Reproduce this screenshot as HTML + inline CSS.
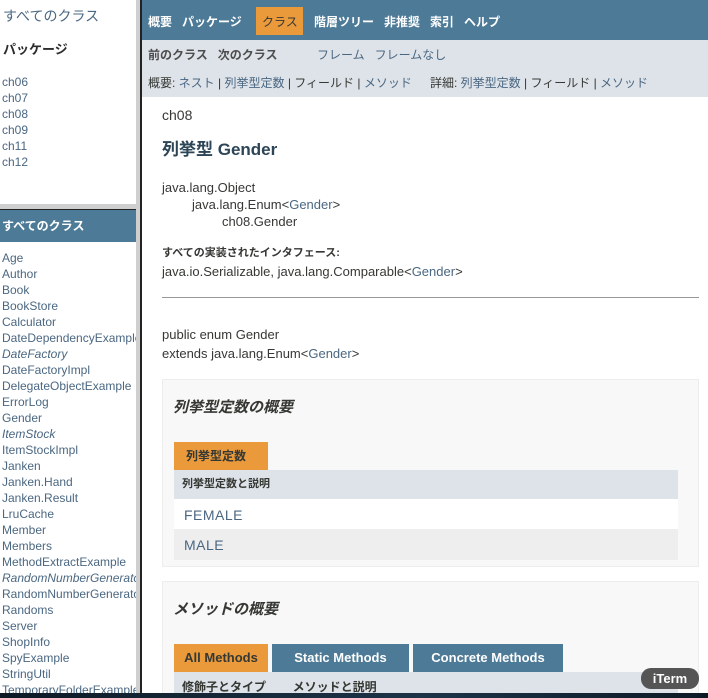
<!DOCTYPE html>
<html><head><meta charset="utf-8"><style>
*{margin:0;padding:0;box-sizing:border-box}
html,body{width:708px;height:698px;overflow:hidden}
body{font-family:"Liberation Sans","Noto Sans CJK JP",sans-serif;color:#353833;font-size:12px;background:#fff}
#w{position:relative;width:708px;height:698px;overflow:hidden}
.a{position:absolute;white-space:nowrap}
.lk{color:#4a6782}
.list div{height:16px;line-height:16px}
</style></head><body><div id="w">
<div class="a" style="left:0;top:0;width:136px;height:204px;background:#fff">
 <div class="a" style="left:3px;top:6px;font-size:14px;color:#4a6782">すべてのクラス</div>
 <div class="a" style="left:3px;top:39px;font-size:13px;font-weight:bold;color:#2c2c2c">パッケージ</div>
 <div class="a list" style="left:2px;top:74px;color:#4a6782"><div>ch06</div><div>ch07</div><div>ch08</div><div>ch09</div><div>ch11</div><div>ch12</div></div>
</div>
<div class="a" style="left:0;top:204px;width:136px;height:5px;background:#cfcfcf"></div>
<div class="a" style="left:0;top:209px;width:136px;height:1px;background:#222"></div>
<div class="a" style="left:0;top:210px;width:136px;height:32px;background:#4d7a97;color:#fff;font-weight:bold;font-size:12px;line-height:32px;padding-left:2px">すべてのクラス</div>
<div class="a list" style="left:2px;top:250px;width:134px;height:443px;overflow:hidden;color:#4a6782">
<div>Age</div><div>Author</div><div>Book</div><div>BookStore</div><div>Calculator</div><div>DateDependencyExample</div><div><i>DateFactory</i></div><div>DateFactoryImpl</div><div>DelegateObjectExample</div><div>ErrorLog</div><div>Gender</div><div><i>ItemStock</i></div><div>ItemStockImpl</div><div>Janken</div><div>Janken.Hand</div><div>Janken.Result</div><div>LruCache</div><div>Member</div><div>Members</div><div>MethodExtractExample</div><div><i>RandomNumberGenerator</i></div><div>RandomNumberGenerator</div><div>Randoms</div><div>Server</div><div>ShopInfo</div><div>SpyExample</div><div>StringUtil</div><div>TemporaryFolderExample</div>
</div>
<div class="a" style="left:136px;top:0;width:4px;height:698px;background:#cfcfcf"></div>
<div class="a" style="left:140px;top:0;width:2px;height:698px;background:#222"></div>
<div class="a" style="left:142px;top:0;width:566px;height:40px;background:#4d7a97"></div>
<div class="a" style="left:256px;top:7px;width:47px;height:28px;background:#ea9a3a"></div>
<div class="a" style="left:148px;top:13px;color:#fff;font-weight:bold">概要&nbsp;&nbsp; パッケージ</div>
<div class="a" style="left:262px;top:13px;color:#353833">クラス</div>
<div class="a" style="left:314px;top:13px;color:#fff;font-weight:bold">階層ツリー&nbsp;&nbsp; 非推奨&nbsp;&nbsp; 索引&nbsp;&nbsp; ヘルプ</div>
<div class="a" style="left:142px;top:40px;width:566px;height:57px;background:#dee3e9"></div>
<div class="a" style="left:148px;top:46px;font-weight:bold;color:#4d4d4d">前のクラス&nbsp;&nbsp; 次のクラス</div>
<div class="a lk" style="left:317px;top:46px;">フレーム&nbsp;&nbsp; フレームなし</div>
<div class="a" style="left:148px;top:74px;">概要: <span class="lk">ネスト</span> | <span class="lk">列挙型定数</span> | フィールド | <span class="lk">メソッド</span></div>
<div class="a" style="left:430px;top:74px;">詳細: <span class="lk">列挙型定数</span> | フィールド | <span class="lk">メソッド</span></div>
<div class="a" style="left:162px;top:107px;font-size:14px">ch08</div>
<div class="a" style="left:162px;top:135px;font-size:17px;font-weight:bold;color:#2c4557">列挙型 Gender</div>
<div class="a" style="left:162px;top:180px;font-size:13px">java.lang.Object</div>
<div class="a" style="left:192px;top:197px;font-size:13px">java.lang.Enum&lt;<span class="lk">Gender</span>&gt;</div>
<div class="a" style="left:222px;top:214px;font-size:13px">ch08.Gender</div>
<div class="a" style="left:162px;top:244px;font-size:11px;font-weight:bold">すべての実装されたインタフェース:</div>
<div class="a" style="left:162px;top:264px;font-size:13px">java.io.Serializable, java.lang.Comparable&lt;<span class="lk">Gender</span>&gt;</div>
<div class="a" style="left:162px;top:297px;width:537px;height:1px;background:#999"></div>
<div class="a" style="left:162px;top:327px;font-size:13px">public enum Gender</div>
<div class="a" style="left:162px;top:346px;font-size:13px">extends java.lang.Enum&lt;<span class="lk">Gender</span>&gt;</div>
<div class="a" style="left:162px;top:379px;width:537px;height:188px;background:#f8f8f8;border:1px solid #ededed"></div>
<div class="a" style="left:173px;top:396px;font-size:15px;font-weight:bold;font-style:italic">列挙型定数の概要</div>
<div class="a" style="left:174px;top:442px;width:94px;height:28px;background:#ea9a3a;font-weight:bold;line-height:28px;padding-left:12px">列挙型定数</div>
<div class="a" style="left:174px;top:470px;width:504px;height:29px;background:#dee3e9;font-size:11px;font-weight:bold;line-height:29px;padding-left:8px">列挙型定数と説明</div>
<div class="a lk" style="left:174px;top:499px;width:504px;height:30px;background:#fff;font-size:14px;line-height:32px;padding-left:10px;letter-spacing:.5px">FEMALE</div>
<div class="a lk" style="left:174px;top:529px;width:504px;height:31px;background:#eeeeef;font-size:14px;line-height:33px;padding-left:10px;letter-spacing:.5px">MALE</div>
<div class="a" style="left:162px;top:581px;width:537px;height:130px;background:#f8f8f8;border:1px solid #ededed"></div>
<div class="a" style="left:173px;top:598px;font-size:15px;font-weight:bold;font-style:italic">メソッドの概要</div>
<div class="a" style="left:174px;top:644px;width:94px;height:28px;background:#ea9a3a;font-weight:bold;font-size:13px;line-height:28px;text-align:center">All Methods</div>
<div class="a" style="left:272px;top:644px;width:137px;height:28px;background:#4d7a97;color:#fff;font-weight:bold;font-size:13px;line-height:28px;text-align:center">Static Methods</div>
<div class="a" style="left:413px;top:644px;width:150px;height:28px;background:#4d7a97;color:#fff;font-weight:bold;font-size:13px;line-height:28px;text-align:center">Concrete Methods</div>
<div class="a" style="left:174px;top:672px;width:504px;height:30px;background:#dee3e9;font-size:12px;font-weight:bold;line-height:30px;padding-left:8px">修飾子とタイプ&nbsp;&nbsp;&nbsp;&nbsp;&nbsp;&nbsp;&nbsp; メソッドと説明</div>
<div class="a" style="left:0;top:693px;width:708px;height:5px;background:linear-gradient(90deg,#0d1a26,#1d3448 60%,#0d1a26)"></div>
<div class="a" style="left:641px;top:668px;width:58px;height:21px;background:#555;border-radius:10px;color:#fff;font-size:13px;font-weight:bold;line-height:21px;text-align:center">iTerm</div>
</div></body></html>
